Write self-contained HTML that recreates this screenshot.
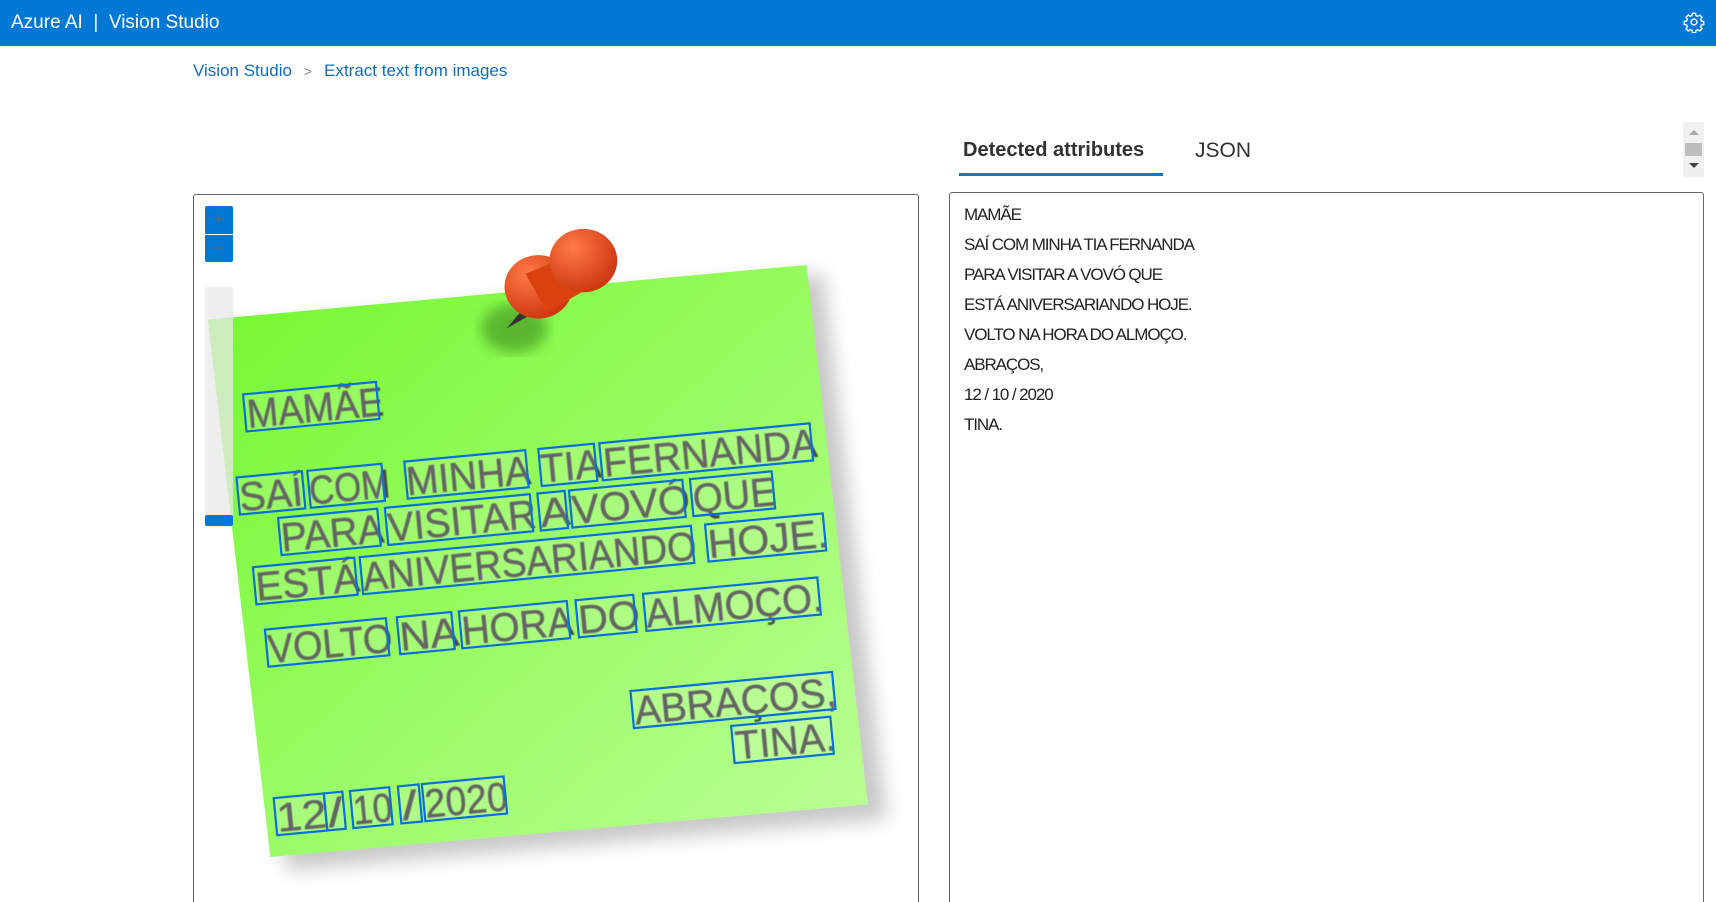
<!DOCTYPE html>
<html><head><meta charset="utf-8"><style>
*{margin:0;padding:0;box-sizing:border-box}
html{width:1716px;height:902px;overflow:hidden}
body{width:1716px;height:902px;overflow:hidden;background:#fff;font-family:"Liberation Sans",sans-serif;position:relative}
.hdr{position:absolute;left:0;top:0;width:1716px;height:46px;background:#0078d4;color:#fff;font-size:19px;line-height:46px;padding-left:11px}
.bc{position:absolute;top:61px;left:193px;font-size:17px;color:#0f6cbd}
.bc .sep{color:#888;margin:0 12px;font-size:14px}
.tab{position:absolute;top:139px;font-size:21px;color:#323130}
.ul{position:absolute;left:959px;top:173px;width:204px;height:3px;background:#0078d4}
.box{position:absolute;border:1px solid #666;border-radius:3px}
.rt{position:absolute;left:964px;font-size:17px;letter-spacing:-1.1px;color:#222;white-space:nowrap}
.btn{position:absolute;left:205px;width:28px;background:#0078d4;color:#666;text-align:center;font-size:18px;line-height:27px}
</style></head><body>
<div class="hdr">Azure AI &nbsp;|&nbsp; Vision Studio</div>
<svg style="position:absolute;left:1683px;top:11px" width="22" height="22" viewBox="0 0 24 24" fill="none" stroke="#fff" stroke-width="1.5"><circle cx="12" cy="12" r="3.2"/><path d="M10.3 2.5h3.4l.5 2.6 1.9.8 2.2-1.5 2.4 2.4-1.5 2.2.8 1.9 2.6.5v3.4l-2.6.5-.8 1.9 1.5 2.2-2.4 2.4-2.2-1.5-1.9.8-.5 2.6h-3.4l-.5-2.6-1.9-.8-2.2 1.5-2.4-2.4 1.5-2.2-.8-1.9-2.6-.5v-3.4l2.6-.5.8-1.9-1.5-2.2 2.4-2.4 2.2 1.5 1.9-.8z"/></svg>
<div class="bc">Vision Studio<span class="sep">&gt;</span>Extract text from images</div>
<div class="tab" style="left:963px;font-weight:600;font-size:20px">Detected attributes</div>
<div class="tab" style="left:1195px">JSON</div>
<div class="ul"></div>
<div style="position:absolute;left:1683px;top:122px;width:21px;height:55px;background:#f0f0f0"></div>
<div style="position:absolute;left:1689px;top:130px;width:0;height:0;border-left:5px solid transparent;border-right:5px solid transparent;border-bottom:5px solid #aaa"></div>
<div style="position:absolute;left:1685px;top:143px;width:17px;height:13px;background:#bdbdbd"></div>
<div style="position:absolute;left:1689px;top:163px;width:0;height:0;border-left:5px solid transparent;border-right:5px solid transparent;border-top:5px solid #444"></div>
<div class="box" style="left:193px;top:194px;width:726px;height:716px"></div>
<div class="box" style="left:949px;top:192px;width:755px;height:718px"></div>
<div class="rt" style="top:205px">MAMÃE</div>
<div class="rt" style="top:235px">SAÍ COM MINHA TIA FERNANDA</div>
<div class="rt" style="top:265px">PARA VISITAR A VOVÓ QUE</div>
<div class="rt" style="top:295px">ESTÁ ANIVERSARIANDO HOJE.</div>
<div class="rt" style="top:325px">VOLTO NA HORA DO ALMOÇO.</div>
<div class="rt" style="top:355px">ABRAÇOS,</div>
<div class="rt" style="top:385px">12 / 10 / 2020</div>
<div class="rt" style="top:415px">TINA.</div>
<svg style="position:absolute;left:0;top:0" width="1716" height="902" viewBox="0 0 1568 824">
<defs>
<linearGradient id="g" x1="0" y1="0" x2="1" y2="1"><stop offset="0" stop-color="#74f72f"/><stop offset="0.5" stop-color="#98fb62"/><stop offset="1" stop-color="#bcff98"/></linearGradient>
<filter id="b" x="-20%" y="-20%" width="140%" height="140%"><feGaussianBlur stdDeviation="9"/></filter>
<filter id="b2"><feGaussianBlur stdDeviation="6"/></filter>
<filter id="tb"><feGaussianBlur stdDeviation="0.6"/></filter>
<radialGradient id="r" cx="0.35" cy="0.3" r="0.8"><stop offset="0" stop-color="#ff7a45"/><stop offset="1" stop-color="#c8300a"/></radialGradient>
</defs>
<polygon points="205,300 752,250 810,748 262,795" fill="#999" opacity="0.55" filter="url(#b)"/>
<polygon points="190,292 737,242 793,735 247,783" fill="url(#g)"/>
<ellipse cx="470" cy="300" rx="30" ry="22" fill="#3a8a1a" opacity="0.6" filter="url(#b2)"/>
<path d="M478 282 L463 300 L484 288z" fill="#333"/>
<ellipse cx="492" cy="262" rx="31" ry="29" fill="url(#r)"/>
<path d="M480 250 L530 230 L540 262 L500 285z" fill="#d9420f"/>
<ellipse cx="533" cy="238" rx="31" ry="29" fill="url(#r)"/>
<g font-family="Liberation Sans,sans-serif" font-size="37" fill="#4a4a4a" stroke="#4a4a4a" stroke-width="0.4">
<g filter="url(#tb)">
<text transform="translate(227,391) rotate(-5.4)" textLength="125" lengthAdjust="spacingAndGlyphs">MAMÃE</text>
<g transform="translate(220,467) rotate(-5.4)">
<text x="0" textLength="58" lengthAdjust="spacingAndGlyphs">SAÍ</text><text x="64" textLength="74" lengthAdjust="spacingAndGlyphs">COM</text><text x="153" textLength="114" lengthAdjust="spacingAndGlyphs">MINHA</text><text x="276" textLength="56" lengthAdjust="spacingAndGlyphs">TIA</text><text x="334" textLength="196" lengthAdjust="spacingAndGlyphs">FERNANDA</text></g>
<g transform="translate(258,504) rotate(-5.4)">
<text x="0" textLength="94" lengthAdjust="spacingAndGlyphs">PARA</text><text x="98" textLength="136" lengthAdjust="spacingAndGlyphs">VISITAR</text><text x="238" textLength="27" lengthAdjust="spacingAndGlyphs">A</text><text x="267" textLength="108" lengthAdjust="spacingAndGlyphs">VOVÓ</text><text x="378" textLength="76" lengthAdjust="spacingAndGlyphs">QUE</text></g>
<g transform="translate(235,549) rotate(-5.4)">
<text x="0" textLength="95" lengthAdjust="spacingAndGlyphs">ESTÁ</text><text x="98" textLength="306" lengthAdjust="spacingAndGlyphs">ANIVERSARIANDO</text><text x="415" textLength="110" lengthAdjust="spacingAndGlyphs">HOJE.</text></g>
<g transform="translate(246,606) rotate(-5.4)">
<text x="0" textLength="114" lengthAdjust="spacingAndGlyphs">VOLTO</text><text x="121" textLength="54" lengthAdjust="spacingAndGlyphs">NA</text><text x="178" textLength="102" lengthAdjust="spacingAndGlyphs">HORA</text><text x="285" textLength="56" lengthAdjust="spacingAndGlyphs">DO</text><text x="347" textLength="162" lengthAdjust="spacingAndGlyphs">ALMOÇO.</text></g>
<text transform="translate(581,662) rotate(-5.4)" textLength="185" lengthAdjust="spacingAndGlyphs">ABRAÇOS,</text>
<text transform="translate(673,694) rotate(-5.4)" textLength="92" lengthAdjust="spacingAndGlyphs">TINA.</text>
<g transform="translate(254,760) rotate(-5.4)">
<text x="0" textLength="46" lengthAdjust="spacingAndGlyphs">12</text><text x="47" textLength="14" lengthAdjust="spacingAndGlyphs">/</text><text x="70" textLength="36" lengthAdjust="spacingAndGlyphs">10</text><text x="115" textLength="14" lengthAdjust="spacingAndGlyphs">/</text><text x="136" textLength="76" lengthAdjust="spacingAndGlyphs">2020</text></g>
</g>
<g fill="rgba(255,255,255,.15)" stroke="#0a6fd8" stroke-width="2">
<rect transform="translate(227,391) rotate(-5.4)" x="-2" y="-31" width="122" height="34"/>
<g transform="translate(220,467) rotate(-5.4)"><rect x="-1" y="-31" width="60" height="34"/><rect x="64" y="-31" width="68" height="34"/><rect x="153" y="-31" width="111" height="34"/><rect x="276" y="-31" width="51" height="34"/><rect x="332" y="-31" width="193" height="34"/></g>
<g transform="translate(258,504) rotate(-5.4)"><rect x="-1" y="-31" width="91" height="34"/><rect x="97" y="-31" width="133" height="34"/><rect x="237" y="-31" width="25" height="34"/><rect x="266" y="-31" width="104" height="34"/><rect x="377" y="-31" width="75" height="34"/></g>
<g transform="translate(235,549) rotate(-5.4)"><rect x="-1" y="-31" width="93" height="34"/><rect x="97" y="-31" width="304" height="34"/><rect x="414" y="-31" width="108" height="34"/></g>
<g transform="translate(246,606) rotate(-5.4)"><rect x="-1" y="-31" width="111" height="34"/><rect x="120" y="-31" width="50" height="34"/><rect x="177" y="-31" width="99" height="34"/><rect x="284" y="-31" width="53" height="34"/><rect x="346" y="-31" width="160" height="34"/></g>
<rect transform="translate(581,662) rotate(-5.4)" x="-2" y="-31" width="185" height="34"/>
<rect transform="translate(673,694) rotate(-5.4)" x="-2" y="-31" width="91" height="34"/>
<g transform="translate(254,760) rotate(-5.4)"><rect x="-1" y="-31" width="46" height="34"/><rect x="45" y="-31" width="17" height="34"/><rect x="69" y="-31" width="36" height="34"/><rect x="113" y="-31" width="19" height="34"/><rect x="135" y="-31" width="75" height="34"/></g>
</g>
</g>
</svg>
<div class="btn" style="top:206px;height:28px;border-radius:2px 2px 0 0">+</div>
<div class="btn" style="top:235px;height:27px;border-radius:0 0 2px 2px">−</div>
<div style="position:absolute;left:205px;top:287px;width:28px;height:240px;background:rgba(232,232,232,.75);border-radius:3px"></div>
<div style="position:absolute;left:205px;top:515px;width:28px;height:11px;background:#0078d4;border-radius:2px"></div>
</body></html>
